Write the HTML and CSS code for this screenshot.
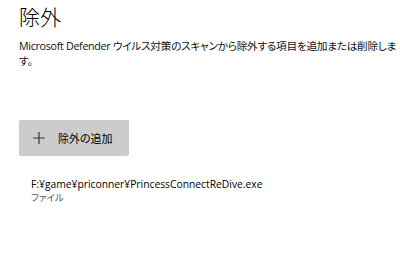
FILE: index.html
```html
<!DOCTYPE html>
<html lang="ja">
<head>
  <meta charset="UTF-8" />
  <title>除外</title>
  <link rel="stylesheet" href="styles.css">
</head>
<body>
  <div class="page">
    <h1 class="title">除外</h1>
    <p class="desc">Microsoft Defender ウイルス対策のスキャンから除外する項目を追加または削除します。</p>

    <button class="add-btn">
      <svg class="plus" width="12" height="12" viewBox="0 0 12 12">
        <path d="M6 0v12M0 6h12" stroke="#333" stroke-width="1.2" fill="none"/>
      </svg>
      <span>除外の追加</span>
    </button>

    <div class="item">
      <div class="item-path">F:¥game¥priconner¥PrincessConnectReDive.exe</div>
      <div class="item-type">ファイル</div>
    </div>
  </div>
</body>
</html>
```

FILE: styles.css
```css
body {
  margin: 0;
  background: #fff;
  color: #000;
  font-family: "Open Sans", "Noto Sans CJK JP", sans-serif;
  font-feature-settings: "palt";
}

.page {
  padding: 1px 0 0 19px;
}

.title {
  margin: 0;
  font-size: 21px;
  font-weight: 300;
  line-height: 30px;
  font-family: "Noto Sans CJK JP", sans-serif;
}

.desc {
  margin: 8px 0 0;
  font-size: 10.7px;
  line-height: 15px;
  letter-spacing: -0.3px;
  color: #111;
}

.add-btn {
  display: flex;
  align-items: center;
  margin-top: 51px;
  width: 110px;
  height: 36px;
  padding: 0 0 0 14px;
  border: none;
  border-radius: 2px;
  background: #cccccc;
  font-family: "Noto Sans CJK JP", sans-serif;
  font-feature-settings: "palt";
  font-size: 11px;
  color: #000;
}

.add-btn span {
  margin-left: 13px;
}

.item {
  margin: 21px 0 0 12px;
}

.item-path {
  font-size: 10.3px;
  line-height: 14px;
}

.item-type {
  font-size: 9.5px;
  line-height: 14px;
  color: #555;
}
```
